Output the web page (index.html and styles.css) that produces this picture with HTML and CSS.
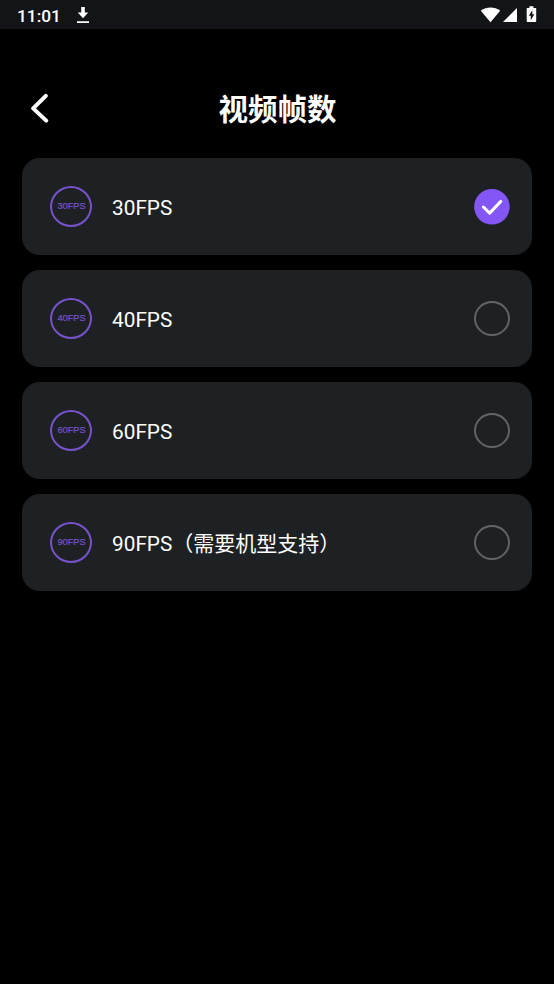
FILE: index.html
```html
<!DOCTYPE html>
<html lang="zh-CN">
<head>
<meta charset="utf-8">
<title>视频帧数</title>
<link rel="stylesheet" href="styles.css">
</head>
<body>
<div class="status">
  <span class="time">11:01</span>
  <svg class="download" width="12" height="17" viewBox="0 0 12 17"><path d="M4.2 0h3.6v5.6h3.4L6 11.3.8 5.6h3.4zM0 14.3h12V16H0z"/></svg>
  <svg class="signals" width="58" height="18" viewBox="0 0 58 18"><path d="M.8 4.7C6.6.4 14.4.4 20.2 4.7L10.5 16.3z"/><path d="M37 2v14H23z"/><path fill-rule="evenodd" d="M49.4.3h4v1.600h2.200q.6 0 .6.7v12.700q0 .7-.7.7h-8.100q-.7 0-.7-.7V2.600q0-.7.7-.7h2zM52.300 4.200l-3.500 5.600h2v4.400l3.500-6h-2z"/></svg>
</div>
<header class="header">
  <svg class="back" width="20" height="30" viewBox="0 0 20 30"><path d="M15.800 2.800L3.200 15.400l13 12.200"/></svg>
  <h1 class="title">视频帧数</h1>
</header>
<main class="list">
  <div class="card"><span class="badge">30FPS</span><span class="label">30FPS</span>
    <svg class="check" width="36" height="36" viewBox="0 0 36 36"><circle cx="17.900" cy="17.800" r="17.800"/><path d="M9.400 18l6.300 6.100L26.800 12.400"/></svg></div>
  <div class="card"><span class="badge">40FPS</span><span class="label">40FPS</span><span class="radio"></span></div>
  <div class="card"><span class="badge">60FPS</span><span class="label">60FPS</span><span class="radio"></span></div>
  <div class="card"><span class="badge">90FPS</span><span class="label">90FPS<span class="note">（需要机型支持）</span></span><span class="radio"></span></div>
</main>
</body>
</html>
```
FILE: styles.css
```css
* { box-sizing: border-box; }
body {
  margin: 0;
  min-height: 984px;
  background: #000;
  color: #fff;
  font-family: Roboto, "Noto Sans CJK SC", sans-serif;
}
.status {
  display: flex;
  align-items: flex-start;
  height: 29px;
  padding: 0 16px 0 17px;
  background: #121417;
}
.time {
  width: 44px;
  margin-top: 5px;
  font-size: 17.300px;
  line-height: 22px;
  font-weight: 500;
}
.download { margin: 7px 0 0 16px; fill: #fff; }
.signals { margin: 6px 0 0 auto; fill: #fff; }
.header {
  display: grid;
  grid-template-columns: 20px 1fr 20px;
  align-items: center;
  height: 129px;
  padding: 29px 29px 0 30px;
}
.back { fill: none; stroke: #fff; stroke-width: 4; stroke-linecap: round; stroke-linejoin: round; }
.title {
  margin: 0;
  padding-top: 4px;
  text-align: center;
  font-size: 29.500px;
  line-height: 44px;
  font-weight: 700;
}
.list {
  display: flex;
  flex-direction: column;
  gap: 15px;
  padding: 0 22px;
}
.card {
  display: flex;
  align-items: center;
  height: 97px;
  padding: 0 22px 0 28px;
  border-radius: 18px;
  background: #1d2123;
}
.badge {
  display: flex;
  align-items: center;
  justify-content: center;
  width: 42px;
  height: 41px;
  padding: 0 0 1px 1px;
  border: 2px solid #7852cb;
  border-radius: 50%;
  color: #7852cb;
  font: 9.200px/12px "Liberation Sans", sans-serif;
  -webkit-text-stroke: 0.2px #7852cb;
}
.label {
  flex: 1;
  margin-left: 20px;
  padding-top: 2px;
  font-size: 20.800px;
  line-height: 30px;
}
.note {
  display: inline-block;
  font-size: 21px;
  vertical-align: top;
}
.radio {
  width: 36px;
  height: 35px;
  border: 2px solid #626466;
  border-radius: 50%;
}
.check circle { fill: #8356f5; }
.check path { fill: none; stroke: #fff; stroke-width: 3; stroke-linecap: round; stroke-linejoin: round; }
```
